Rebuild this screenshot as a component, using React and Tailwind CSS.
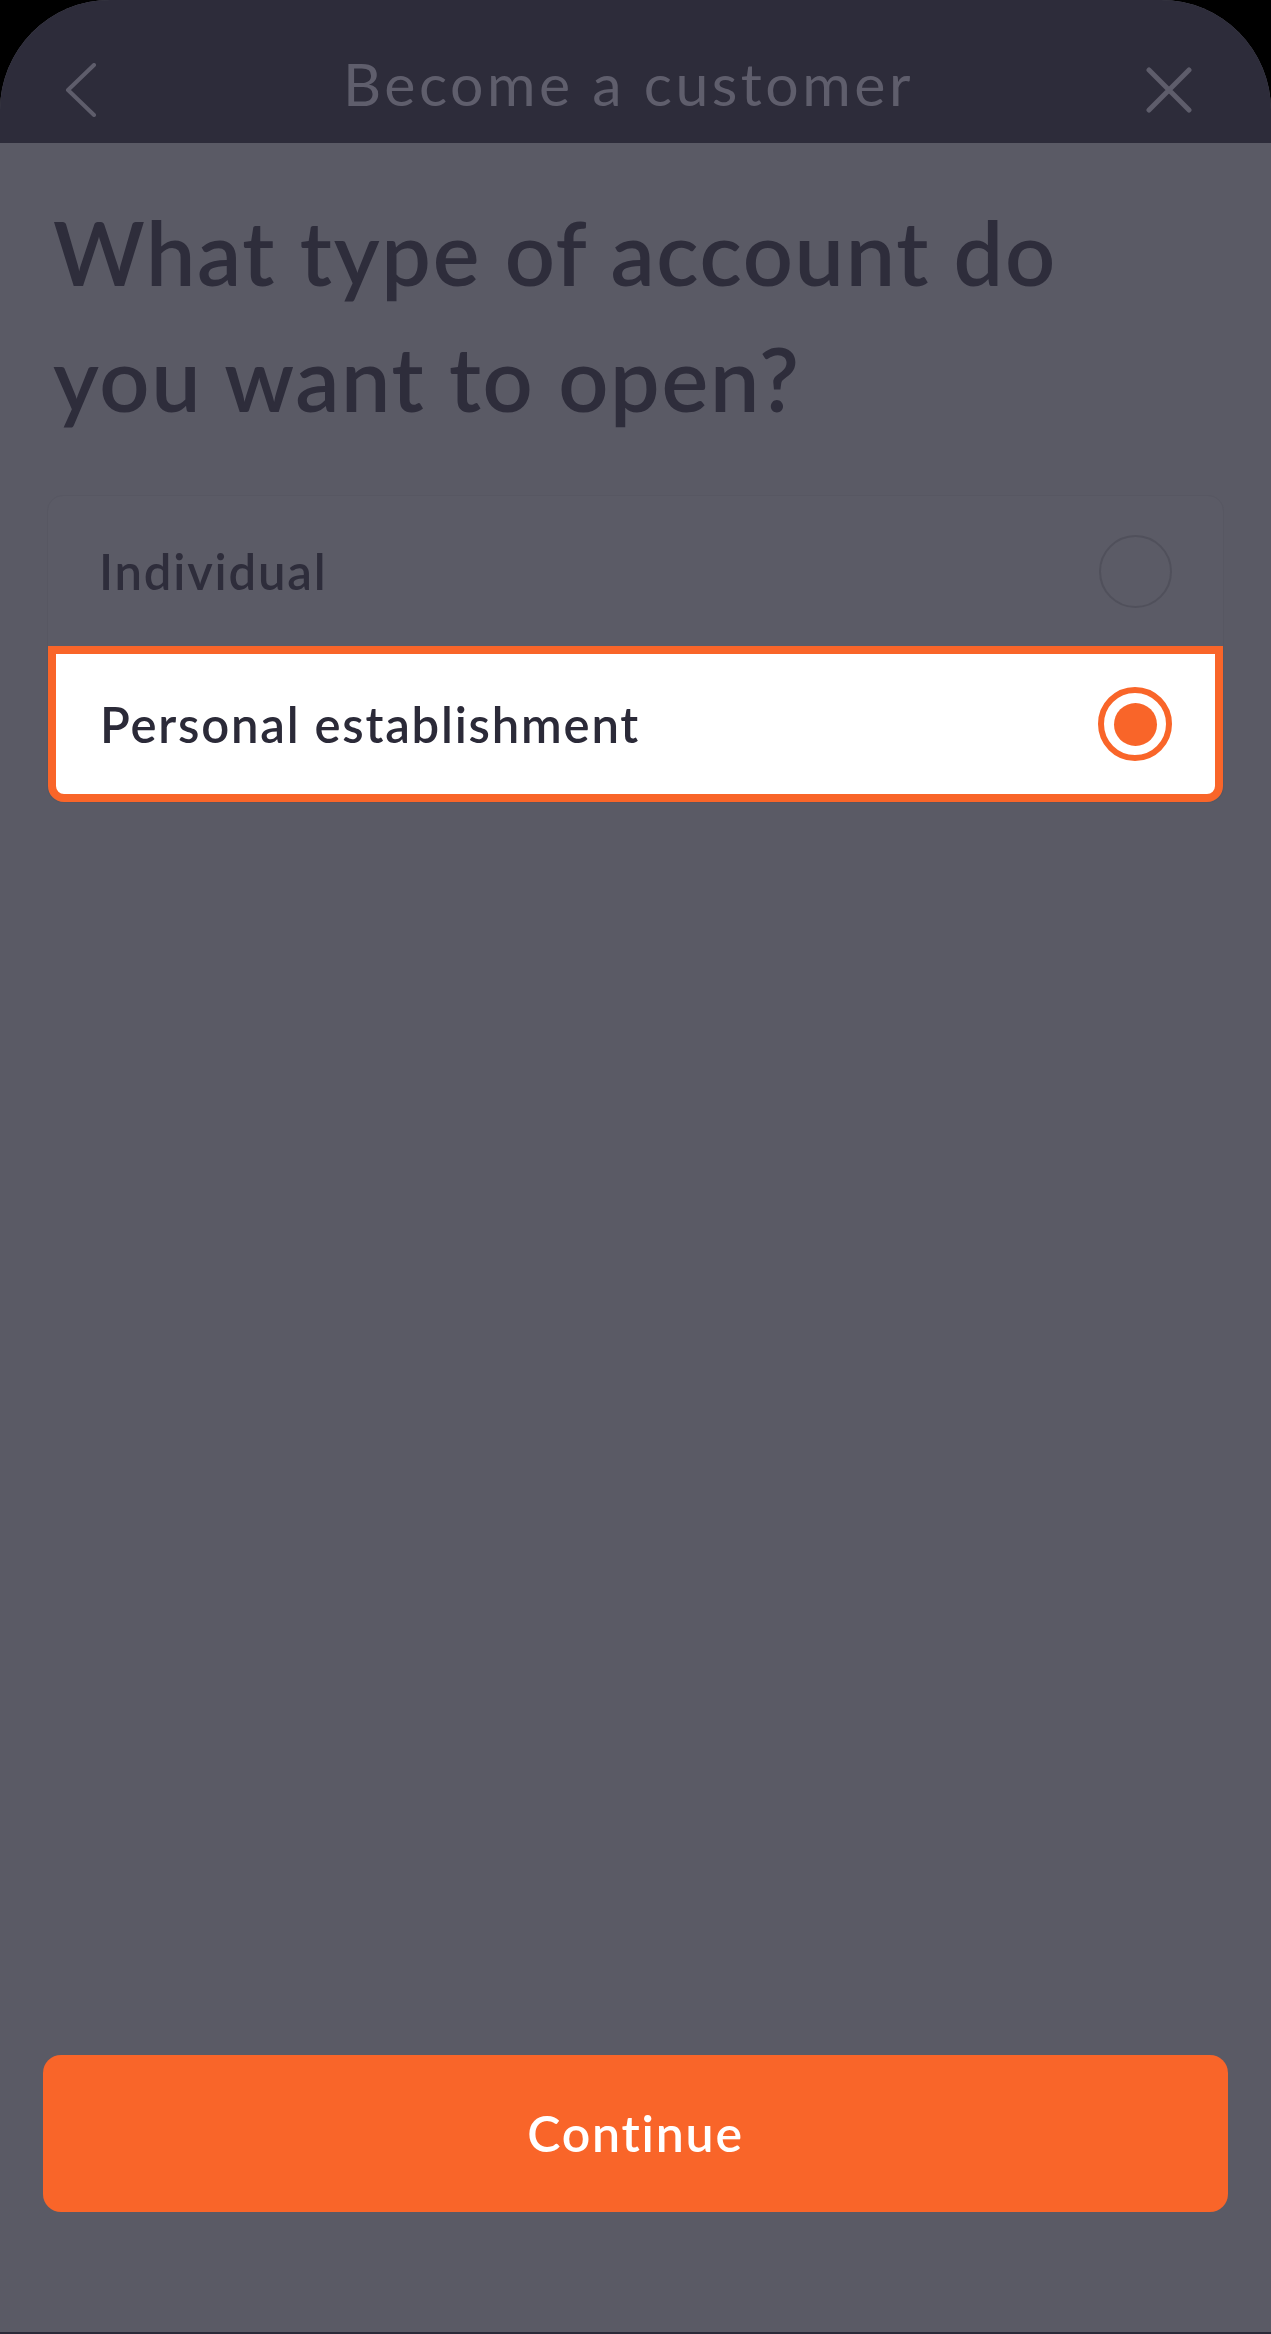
import { useState } from 'react'

const font = { fontFamily: 'Lato, "Open Sans", sans-serif' }

const options = [
  { id: 'individual', label: 'Individual' },
  { id: 'personal', label: 'Personal establishment' },
]

const Radio = ({ checked }) =>
  checked ? (
    <span className="flex h-[74px] w-[74px] items-center justify-center rounded-full border-[6px] border-[#f96529] bg-white">
      <span className="h-[43px] w-[43px] rounded-full bg-[#f96529]" />
    </span>
  ) : (
    <span className="h-[73px] w-[73px] rounded-full border-2 border-[#50505b]" />
  )

const App = () => {
  const [selected, setSelected] = useState('personal')

  return (
    <div className="h-[2334px] w-[1271px] bg-black" style={font}>
      <div className="flex h-full flex-col overflow-hidden rounded-t-[110px] border-b-2 border-[#2b2a38] bg-[#5a5a65]">
        {/* Header */}
        <header className="grid h-[143px] shrink-0 grid-cols-[1fr_auto_1fr] items-center bg-[#2d2c3a] pl-[65px] pr-[79px] pt-[36px]">
          <button className="flex h-[54px] w-[32px] items-center justify-self-start">
            <svg width="32" height="54" viewBox="0 0 32 54" fill="none">
              <path d="M29 2 L3 27 L29 52" stroke="#5e5d6b" strokeWidth="4" strokeLinecap="round" strokeLinejoin="round" />
            </svg>
          </button>
          <h1 className="mb-[12px] text-[59px] leading-none tracking-[3.5px] text-[#5f5e6c]">Become a customer</h1>
          <button className="flex h-[46px] w-[46px] items-center justify-center justify-self-end">
            <svg width="46" height="46" viewBox="0 0 46 46" fill="none">
              <path d="M3 3 L43 43 M43 3 L3 43" stroke="#5e5d6b" strokeWidth="5" strokeLinecap="round" />
            </svg>
          </button>
        </header>

        {/* Question */}
        <h2 className="mt-[46px] pl-[53px] text-[88px] font-semibold leading-[126px] tracking-[1.7px] text-[#2e2d3b]">
          What type of account do
          <br />
          you want to open?
        </h2>

        {/* Options */}
        <div className="mx-[47px] mt-[54px] flex flex-col rounded-[16px] border border-[#575762] bg-[#5b5b66]">
          {options.map((opt) => {
            const active = selected === opt.id
            return (
              <button
                key={opt.id}
                onClick={() => setSelected(opt.id)}
                className={
                  active
                    ? 'flex h-[156px] items-center justify-between rounded-b-[16px] border-[8px] border-[#f96529] bg-white pl-[44px] pr-[43px] text-left text-[#2b2a38]'
                    : 'flex h-[150px] items-center justify-between rounded-t-[16px] pl-[51px] pr-[51px] text-left text-[#2e2d3b]'
                }
              >
                <span className="text-[49px] font-semibold leading-none tracking-[1.8px]">{opt.label}</span>
                <Radio checked={active} />
              </button>
            )
          })}
        </div>

        {/* Continue */}
        <div className="mt-auto mb-[120px] px-[43px]">
          <button className="flex h-[157px] w-full items-center justify-center rounded-[18px] bg-[#f96529] text-[50px] font-semibold tracking-[1.8px] text-white">
            Continue
          </button>
        </div>
      </div>
    </div>
  )
}

export default App
